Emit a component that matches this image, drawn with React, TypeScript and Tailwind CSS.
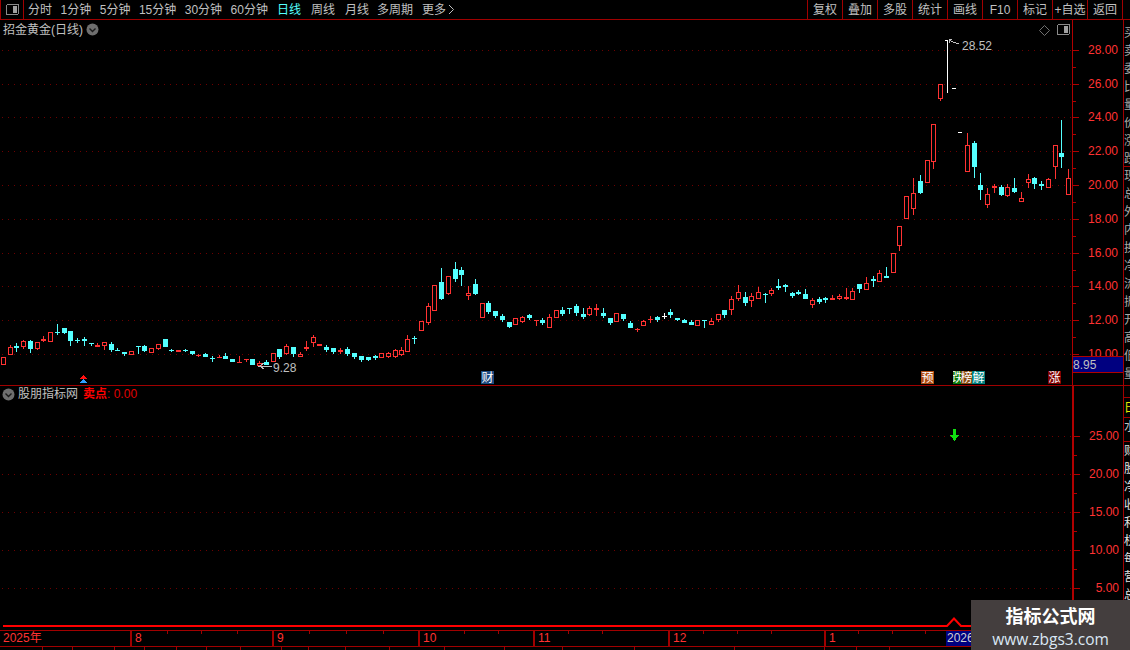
type Candle = [number, number, number, number, number, 'r' | 'c' | 'w'];

const RED = '#ff3232';
const CYAN = '#54ffff';

// x, high, body top, body bottom, low, colour (all in page pixels)
const candles: Candle[] = [
	[3, 357, 357, 365, 365, 'r'], [10, 345, 347, 355, 355, 'r'], [16, 343, 346, 348, 352, 'c'], [23, 340, 341, 347, 349, 'r'],
	[30, 340, 341, 349, 353, 'c'], [37, 342, 342, 349, 350, 'r'], [43, 336, 339, 341, 342, 'r'], [50, 332, 332, 342, 342, 'r'],
	[57, 324, 332, 333, 335, 'c'], [64, 328, 328, 333, 334, 'c'], [70, 331, 331, 341, 346, 'c'], [77, 338, 340, 341, 343, 'c'],
	[84, 337, 339, 341, 346, 'c'], [91, 343, 343, 344, 346, 'c'], [97, 343, 345, 347, 347, 'r'], [104, 342, 342, 346, 350, 'r'],
	[111, 342, 344, 350, 352, 'c'], [117, 348, 350, 351, 351, 'c'], [124, 352, 352, 354, 356, 'c'], [131, 351, 351, 355, 355, 'r'],
	[138, 346, 346, 347, 354, 'c'], [144, 345, 346, 351, 352, 'c'], [151, 348, 348, 353, 353, 'r'], [158, 344, 344, 349, 350, 'r'],
	[165, 339, 339, 347, 347, 'c'], [171, 349, 350, 351, 352, 'c'], [178, 350, 350, 352, 352, 'r'], [185, 349, 350, 351, 352, 'c'],
	[192, 351, 351, 354, 355, 'c'], [198, 354, 355, 356, 357, 'r'], [205, 353, 354, 357, 357, 'c'], [212, 356, 358, 359, 362, 'c'],
	[219, 355, 357, 358, 358, 'r'], [225, 353, 356, 359, 359, 'c'], [232, 359, 359, 362, 362, 'c'], [239, 356, 362, 363, 363, 'r'],
	[246, 359, 359, 360, 362, 'r'], [252, 359, 359, 365, 365, 'c'], [259, 361, 363, 366, 367, 'r'], [266, 360, 362, 365, 365, 'c'],
	[273, 353, 353, 362, 362, 'r'], [279, 349, 349, 357, 359, 'c'], [286, 344, 346, 354, 355, 'r'], [293, 347, 347, 354, 357, 'c'],
	[300, 352, 354, 357, 357, 'r'], [306, 341, 347, 349, 351, 'r'], [313, 335, 337, 343, 347, 'r'], [319, 344, 344, 346, 346, 'r'],
	[326, 345, 347, 350, 352, 'c'], [333, 348, 348, 352, 354, 'c'], [340, 348, 350, 352, 354, 'r'], [347, 347, 349, 354, 356, 'c'],
	[354, 353, 353, 357, 359, 'c'], [361, 356, 356, 360, 362, 'c'], [368, 357, 357, 360, 361, 'c'], [375, 355, 356, 358, 360, 'c'],
	[381, 353, 353, 358, 358, 'r'], [388, 352, 353, 357, 358, 'r'], [395, 349, 350, 357, 358, 'r'], [401, 347, 350, 355, 356, 'r'],
	[407, 335, 339, 352, 352, 'r'], [414, 336, 338, 339, 344, 'c'], [421, 321, 321, 331, 331, 'r'], [428, 303, 306, 323, 325, 'r'],
	[434, 285, 285, 311, 311, 'r'], [441, 268, 282, 299, 300, 'c'], [448, 276, 276, 294, 295, 'r'], [455, 262, 269, 279, 282, 'c'],
	[461, 267, 270, 275, 286, 'c'], [468, 286, 293, 296, 300, 'r'], [475, 279, 284, 294, 295, 'c'], [482, 303, 303, 318, 318, 'r'],
	[488, 301, 303, 312, 314, 'c'], [495, 311, 311, 316, 318, 'c'], [502, 314, 316, 320, 322, 'c'], [509, 322, 322, 327, 328, 'c'],
	[515, 318, 318, 325, 325, 'r'], [522, 316, 317, 322, 323, 'r'], [529, 314, 315, 318, 320, 'c'], [536, 320, 320, 321, 326, 'r'],
	[542, 318, 320, 323, 325, 'c'], [549, 314, 317, 328, 328, 'r'], [556, 310, 310, 318, 318, 'r'], [562, 307, 310, 314, 316, 'c'],
	[569, 308, 308, 309, 314, 'c'], [576, 304, 306, 313, 316, 'c'], [583, 308, 314, 317, 319, 'c'], [589, 306, 308, 315, 316, 'r'],
	[596, 304, 308, 310, 316, 'r'], [603, 308, 313, 316, 318, 'c'], [610, 318, 318, 323, 325, 'c'], [616, 313, 313, 322, 322, 'r'],
	[623, 314, 314, 319, 321, 'c'], [630, 321, 323, 328, 328, 'c'], [637, 328, 329, 330, 332, 'r'], [643, 320, 321, 326, 326, 'r'],
	[650, 316, 319, 320, 323, 'r'], [657, 316, 317, 320, 322, 'c'], [664, 313, 316, 317, 319, 'w'], [670, 309, 312, 315, 318, 'c'],
	[677, 318, 318, 320, 321, 'c'], [684, 319, 320, 323, 323, 'c'], [691, 320, 322, 325, 325, 'c'], [697, 320, 320, 326, 326, 'r'],
	[704, 320, 320, 321, 328, 'c'], [711, 318, 321, 325, 325, 'r'], [718, 314, 314, 320, 322, 'r'], [724, 310, 310, 315, 318, 'c'],
	[731, 296, 299, 310, 315, 'r'], [738, 285, 292, 299, 301, 'r'], [745, 292, 297, 303, 306, 'c'], [751, 293, 296, 301, 307, 'r'],
	[758, 287, 292, 299, 299, 'r'], [765, 293, 294, 295, 303, 'c'], [771, 288, 290, 294, 296, 'r'], [778, 279, 286, 288, 290, 'c'],
	[785, 284, 285, 287, 292, 'c'], [792, 292, 293, 296, 298, 'c'], [798, 290, 292, 294, 295, 'c'], [805, 289, 294, 299, 299, 'c'],
	[812, 298, 300, 305, 308, 'r'], [819, 297, 299, 302, 304, 'c'], [825, 297, 298, 300, 303, 'c'], [832, 295, 298, 300, 300, 'r'],
	[839, 294, 296, 299, 300, 'r'], [846, 288, 297, 299, 300, 'r'], [852, 288, 291, 300, 300, 'r'], [859, 284, 284, 289, 293, 'c'],
	[866, 277, 283, 290, 290, 'r'], [873, 276, 279, 281, 287, 'c'], [879, 270, 273, 282, 282, 'r'], [886, 267, 276, 278, 278, 'c'],
	[893, 253, 253, 273, 273, 'r'], [899, 226, 226, 246, 251, 'r'], [906, 196, 196, 219, 219, 'r'], [913, 178, 193, 209, 215, 'r'],
	[920, 175, 181, 193, 194, 'c'], [927, 160, 160, 183, 183, 'r'], [933, 124, 124, 162, 169, 'r'], [940, 84, 84, 99, 101, 'r'],
	[967, 133, 145, 172, 172, 'r'], [974, 141, 143, 167, 178, 'c'], [980, 173, 185, 190, 200, 'c'], [987, 188, 194, 205, 208, 'r'],
	[994, 184, 186, 188, 193, 'r'], [1001, 185, 187, 195, 196, 'c'], [1007, 184, 187, 196, 197, 'r'], [1014, 178, 188, 192, 193, 'c'],
	[1021, 192, 198, 202, 202, 'r'], [1028, 174, 179, 183, 188, 'r'], [1034, 177, 178, 184, 189, 'c'], [1041, 181, 184, 186, 190, 'c'],
	[1048, 178, 179, 188, 188, 'r'], [1055, 145, 145, 167, 179, 'r'], [1061, 120, 153, 157, 168, 'c'], [1068, 169, 178, 195, 195, 'r'],
];

const mainLevels = [
	[50, '28.00'], [84, '26.00'], [117, '24.00'], [151, '22.00'], [185, '20.00'],
	[219, '18.00'], [253, '16.00'], [286, '14.00'], [320, '12.00'], [354, '10.00'],
] as const;
const subLevels = [
	[436, '25.00'], [474, '20.00'], [512, '15.00'], [550, '10.00'], [588, '5.00'],
] as const;

const intradayTabs = ['分时', '1分钟', '5分钟', '15分钟', '30分钟', '60分钟'];
const periodTabs = ['日线', '周线', '月线'];
const buttons = ['复权', '叠加', '多股', '统计', '画线', 'F10', '标记', '+自选', '返回'];
const months = [
	{ label: '2025年', width: 'w-[130px]' },
	{ label: '8', width: 'w-[142px]' },
	{ label: '9', width: 'w-[146px]' },
	{ label: '10', width: 'w-[115px]' },
	{ label: '11', width: 'w-[135px]' },
	{ label: '12', width: 'w-[156px]' },
	{ label: '1', width: 'w-[122px]' },
];
const monthTicks = [167, 201, 237, 309, 346, 383, 464, 498, 568, 602, 703, 737, 771, 858, 892, 925, 985, 1020];
const statusStops = [43, 30, 42, 30, 32, 30, 34, 41, 27, 37, 44, 55, 60, 58, 72, 100, 90, 32, 33];
const sideTop = ['买', '卖', '委', '比', '量', '价', '涨', '跌'];
const sideMid = ['现', '总', '外', '内', '换', '净', '流', '振', '开', '高', '低', '量', '额', '市'];
const sideBottom = ['财', '股', '净', '收', '利', '权', '每', '营', '总'];

function CandleMark({ c }: { c: Candle }) {
	const [x, hi, top, bot, lo, kind] = c;
	const color = kind === 'r' ? RED : kind === 'c' ? CYAN : '#ffffff';
	const solid = kind !== 'r' || bot - top <= 2;
	return (
		<g>
			<rect x={x} y={hi} width={1} height={lo - hi} fill={color} />
			{solid ? (
				<rect x={x - 2} y={top} width={5} height={Math.max(bot - top, 1)} fill={color} />
			) : (
				<rect x={x - 1.5} y={top + 0.5} width={4} height={bot - top - 1} fill="#000" stroke={color} />
			)}
		</g>
	);
}

function GridLines({ levels }: { levels: readonly (readonly [number, string])[] }) {
	return (
		<>
			{levels.map(([y]) => (
				<line key={y} x1={2} x2={1072} y1={y + 0.5} y2={y + 0.5} stroke="#6e0000" strokeDasharray="1 5" />
			))}
		</>
	);
}

function Axis({ levels, top, height }: { levels: readonly (readonly [number, string])[]; top: number; height: number }) {
	const step = levels[1][0] - levels[0][0];
	return (
		<svg className="block" width={50} height={height} viewBox={`0 ${top} 50 ${height}`} shapeRendering="crispEdges">
			{levels.map(([y, label]) => (
				<g key={y}>
					<rect x={0} y={y} width={6} height={1} fill="#b00000" />
					<rect x={0} y={y + Math.round(step / 2)} width={3} height={1} fill="#b00000" />
					<text x={45} y={y + 4} fontSize={12} fill={RED} textAnchor="end">
						{label}
					</text>
				</g>
			))}
		</svg>
	);
}

function RoundChevron() {
	return (
		<svg width={13} height={13} viewBox="0 0 13 13">
			<circle cx={6.5} cy={6.5} r={6} fill="#6e6e6e" />
			<polyline points="3.5,5.5 6.5,8.5 9.5,5.5" fill="none" stroke="#1a1a1a" strokeWidth={1.4} />
		</svg>
	);
}

function PanelIcon() {
	return (
		<svg width={13} height={11} viewBox="0 0 13 11" shapeRendering="crispEdges">
			<rect x={0.5} y={0.5} width={12} height={10} rx={1.5} fill="none" stroke="#8a8a8a" />
			<rect x={7} y={2} width={4} height={7} fill="#a0a0a0" />
		</svg>
	);
}

function Tag({ text, left, width = 'w-[13px]', bg }: { text: string; left: string; width?: string; bg: string }) {
	return (
		<span className={`absolute top-[351px] flex h-[13px] items-center justify-center overflow-hidden text-[12px] leading-none text-white ${left} ${width} ${bg}`}>
			{text}
		</span>
	);
}

function SideText({ items, color = 'text-[#a8a8a8]' }: { items: string[]; color?: string }) {
	return (
		<div className={`flex flex-col text-[12px] leading-[18px] ${color}`}>
			{items.map((t, i) => (
				<span key={i}>{t}</span>
			))}
		</div>
	);
}

export default function App() {
	return (
		<div className="relative flex h-[650px] w-[1130px] flex-col overflow-hidden bg-black font-['Liberation_Sans','Noto_Sans_CJK_SC',sans-serif] text-[12px] text-[#c0c0c0]">
			{/* toolbar */}
			<div className="flex h-5 items-stretch border-b border-[#a00000]">
				<div className="flex w-6 items-center justify-center border-x border-[#a00000]">
					<PanelIcon />
				</div>
				<div className="ml-1 flex items-center text-[12px]">
					<div className="flex gap-[8.5px]">
						{intradayTabs.map((t) => (
							<span key={t}>{t}</span>
						))}
					</div>
					<div className="ml-[9px] flex gap-[10px]">
						{periodTabs.map((t) => (
							<span key={t} className={t === '日线' ? 'text-[#54ffff]' : ''}>
								{t}
							</span>
						))}
					</div>
					<span className="ml-[8px]">多周期</span>
					<span className="ml-[9px]">更多</span>
					<svg className="ml-[2px]" width={7} height={11} viewBox="0 0 7 11">
						<polyline points="1,1 5.5,5.5 1,10" fill="none" stroke="#c0c0c0" />
					</svg>
				</div>
				<div className="ml-auto mr-[7px] flex border-r border-[#a00000]">
					{buttons.map((b) => (
						<span key={b} className="flex w-[35px] items-center justify-center whitespace-nowrap border-l border-[#a00000]">
							{b}
						</span>
					))}
				</div>
			</div>

			{/* price pane */}
			<div className="flex h-[366px] border-b border-[#a00000]">
				<div className="relative w-[1072px]">
					<svg className="block" width={1072} height={365} viewBox="0 20 1072 365" shapeRendering="crispEdges">
						<GridLines levels={mainLevels} />
						{candles.map((c) => (
							<CandleMark key={c[0]} c={c} />
						))}
						<rect x={947} y={40} width={1} height={53} fill="#fff" />
						<rect x={945} y={40} width={3} height={1} fill="#fff" />
						<rect x={952} y={88} width={4} height={1} fill="#fff" />
						<rect x={958} y={132} width={4} height={1} fill="#fff" />
						<polyline points="949,40 953,42 959,44" fill="none" stroke="#c0c0c0" />
						<polyline points="949,40 952,39" fill="none" stroke="#c0c0c0" />
						<polyline points="949,40 950,43" fill="none" stroke="#c0c0c0" />
						<text x={962} y={50} fontSize={12} fill="#c0c0c0">28.52</text>
						<polyline points="272,366 260,366 264,363" fill="none" stroke="#c0c0c0" />
						<polyline points="260,366 264,369" fill="none" stroke="#c0c0c0" />
						<text x={273} y={372} fontSize={12} fill="#c0c0c0">9.28</text>
						<polygon points="83,375 87,379 79,379" fill="#ff1010" />
						<polygon points="83,379 87,383 79,383" fill="#30a0ff" />
					</svg>
					<div className="absolute left-[3px] top-0 flex h-[19px] items-center gap-[3px]">
						<span>招金黄金(日线)</span>
						<RoundChevron />
					</div>
					<svg className="absolute left-[1039px] top-[5px]" width={11} height={11} viewBox="0 0 11 11">
						<polygon points="5.5,0.5 10.5,5.5 5.5,10.5 0.5,5.5" fill="none" stroke="#707070" />
					</svg>
					<div className="absolute left-[1057px] top-[4px]">
						<PanelIcon />
					</div>
					<Tag text="财" left="left-[481px]" bg="bg-[#1c4a80]" />
					<Tag text="预" left="left-[921px]" bg="bg-[#b04a10]" />
					<Tag text="跌" left="left-[953px]" width="w-[8px]" bg="bg-[#0a7a0a]" />
					<Tag text="榜" left="left-[961px]" width="w-[11px]" bg="bg-[#8a4a10]" />
					<Tag text="解" left="left-[972px]" bg="bg-[#008080]" />
					<Tag text="涨" left="left-[1048px]" bg="bg-[#800000]" />
				</div>
				<div className="relative w-[51px] border-l border-[#b00000]">
					<Axis levels={mainLevels} top={20} height={365} />
					<div className="absolute inset-x-0 top-[336px] flex h-[17px] items-center border-y border-[#b00000] bg-[#000080] text-[12px]">
						8.95
					</div>
				</div>
				<div className="w-[7px] overflow-hidden border-l border-[#a00000] pt-1">
					<SideText items={sideTop} />
					<div className="mt-[-2px] border-t border-[#a00000]">
						<SideText items={sideMid} />
					</div>
				</div>
			</div>

			{/* indicator pane */}
			<div className="flex h-[244px]">
				<div className="relative w-[1072px]">
					<svg className="block" width={1072} height={244} viewBox="0 386 1072 244" shapeRendering="crispEdges">
						<GridLines levels={subLevels} />
						<rect x={953} y={429} width={3} height={7} fill="#10e010" />
						<polygon points="950,435 959,435 954.5,441" fill="#10e010" />
					</svg>
					<svg className="absolute left-0 top-0" width={1072} height={244} viewBox="0 386 1072 244">
						<polyline points="3,626 947,626 954,618.5 961,626 1072,626" fill="none" stroke="#ff0000" strokeWidth={2} />
					</svg>
					<div className="absolute left-[2px] top-0 flex h-[16px] items-center gap-[3px]">
						<RoundChevron />
						<span>股朋指标网</span>
						<span className="ml-[2px] font-bold text-[#ff0000]">卖点</span>
						<span className="-ml-[3px] text-[#e00000]">: 0.00</span>
					</div>
				</div>
				<div className="w-[51px] border-l-2 border-[#b00000]">
					<Axis levels={subLevels} top={386} height={244} />
				</div>
				<div className="flex w-[7px] flex-col overflow-hidden border-l border-[#a00000]">
					<div className="h-[11px]" />
					<div className="h-[21px] border-y border-[#a00000] leading-[20px] text-[#e8e800]">日</div>
					<div className="h-[24px] border-b border-[#a00000] text-[#c0c0c0]">水</div>
					<SideText items={sideBottom} color="text-[#e0e0e0]" />
				</div>
			</div>

			{/* date axis */}
			<div className="relative flex h-[17px] border-y border-[#a00000] text-[12px] leading-[15px] text-[#ff3232]">
				{months.map((m, i) => (
					<span key={m.label} className={`pl-[3px] ${m.width} ${i > 0 ? 'border-l-2 border-[#a00000]' : ''}`}>
						{m.label}
					</span>
				))}
				<span className="w-[26px] overflow-hidden bg-[#000080] pl-[1px] text-[#d0d0d0]">2026</span>
				<svg className="absolute left-0 top-0" width={1130} height={3} shapeRendering="crispEdges">
					{monthTicks.map((x) => (
						<rect key={x} x={x} y={0} width={1} height={3} fill="#a00000" />
					))}
				</svg>
			</div>

			{/* cut off status bar */}
			<div className="flex h-[3px] overflow-hidden">
				{statusStops.map((w, i) => (
					<span key={i} className="shrink-0 border-r border-[#a00000]" style={{ width: w }} />
				))}
			</div>

			{/* watermark */}
			<div className="absolute left-[971px] top-[600px] flex h-[50px] w-[159px] flex-col items-center bg-[#443e3e] pt-[5px]">
				<span className="text-[18px] font-bold leading-[24px] text-white">指标公式网</span>
				<span className="font-['Open_Sans',sans-serif] text-[15.5px] leading-[20px] text-[#dbe8f5]">www.zbgs3.com</span>
			</div>
		</div>
	);
}
